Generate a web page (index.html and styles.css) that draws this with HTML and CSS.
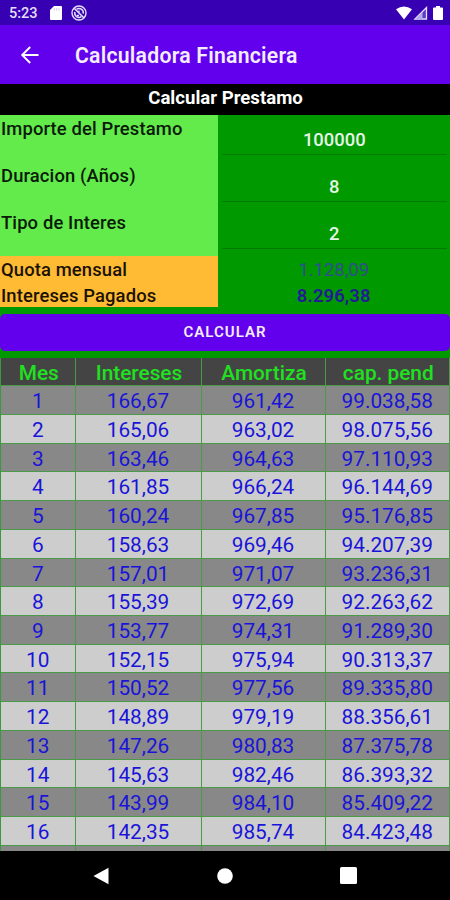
FILE: index.html
```html
<!DOCTYPE html>
<html lang="es">
<head>
  <meta charset="UTF-8">
  <title>Calculadora Financiera</title>
  <link rel="stylesheet" href="styles.css">
</head>
<body>

  <!-- Barra de estado -->
  <div class="estado">
    <span class="hora">5:23</span>
    <svg class="ico-sd" width="12" height="14" viewBox="0 0 12 14"><path d="M4 0H11Q12 0 12 1V13Q12 14 11 14H1Q0 14 0 13V4Z" fill="#fff"/><path d="M4.3 2v2.6M6.6 2v2.6M8.9 2v2.6" stroke="#d5ccf3" stroke-width="1"/></svg>
    <svg class="ico-sync" width="16" height="16" viewBox="0 0 16 16" fill="none" stroke="#e4defa"><circle cx="8" cy="8" r="7" stroke-width="1.4"/><path d="M5.6 4.2A4.3 4.3 0 0 1 12.2 8.6M10.4 11.7A4.3 4.3 0 0 1 3.9 7" stroke-width="1.5"/><path d="M3.2 3.2L12.8 12.8" stroke-width="1.6"/><path d="M8 5.5V7.5M8 10.5H6" stroke-width="1.3"/></svg>
    <svg class="ico-red" width="48" height="15" viewBox="0 0 48 15"><path d="M0 3.2Q8 -2.2 16 3.2L8 13.5Z" fill="#fff"/><path d="M19 13L30.5 1.5V13Z" fill="#5a3cc6" stroke="#e6e0fa" stroke-width="1.3"/><path d="M19 13.5L26.5 6V13.5Z" fill="#b5a8e8"/><path d="M40 0h4v1.5h2q1 0 1 1V13q0 1-1 1h-8q-1 0-1-1V2.5q0-1 1-1h2z" fill="#fff"/></svg>
  </div>

  <!-- Cabecera -->
  <header class="cabecera">
    <svg width="20" height="20" viewBox="0 0 20 20" fill="none" stroke="#fff" stroke-width="1.9"><path d="M18.5 10H2.5M10.2 2L2.2 10L10.2 18"/></svg>
    <h1>Calculadora Financiera</h1>
  </header>

  <h2 class="subtitulo">Calcular Prestamo</h2>

  <main>
    <div class="formulario">
      <div class="campo">
        <label for="importe">Importe del Prestamo</label>
        <div class="entrada"><input id="importe" type="text" value="100000"></div>
      </div>
      <div class="campo">
        <label for="duracion">Duracion (Años)</label>
        <div class="entrada"><input id="duracion" type="text" value="8"></div>
      </div>
      <div class="campo">
        <label for="interes">Tipo de Interes</label>
        <div class="entrada"><input id="interes" type="text" value="2"></div>
      </div>
      <div class="resultado">
        <span class="nombre">Quota mensual</span>
        <span class="valor cuota">1.128,09</span>
      </div>
      <div class="resultado">
        <span class="nombre">Intereses Pagados</span>
        <span class="valor total">8.296,38</span>
      </div>
    </div>

    <button class="calcular">CALCULAR</button>

    <!-- Tabla de amortizacion -->
    <div class="tabla">
      <div class="fila titulos"><span>Mes</span><span>Intereses</span><span>Amortiza</span><span>cap. pend</span></div>
      <div class="fila"><span>1</span><span>166,67</span><span>961,42</span><span>99.038,58</span></div>
      <div class="fila"><span>2</span><span>165,06</span><span>963,02</span><span>98.075,56</span></div>
      <div class="fila"><span>3</span><span>163,46</span><span>964,63</span><span>97.110,93</span></div>
      <div class="fila"><span>4</span><span>161,85</span><span>966,24</span><span>96.144,69</span></div>
      <div class="fila"><span>5</span><span>160,24</span><span>967,85</span><span>95.176,85</span></div>
      <div class="fila"><span>6</span><span>158,63</span><span>969,46</span><span>94.207,39</span></div>
      <div class="fila"><span>7</span><span>157,01</span><span>971,07</span><span>93.236,31</span></div>
      <div class="fila"><span>8</span><span>155,39</span><span>972,69</span><span>92.263,62</span></div>
      <div class="fila"><span>9</span><span>153,77</span><span>974,31</span><span>91.289,30</span></div>
      <div class="fila"><span>10</span><span>152,15</span><span>975,94</span><span>90.313,37</span></div>
      <div class="fila"><span>11</span><span>150,52</span><span>977,56</span><span>89.335,80</span></div>
      <div class="fila"><span>12</span><span>148,89</span><span>979,19</span><span>88.356,61</span></div>
      <div class="fila"><span>13</span><span>147,26</span><span>980,83</span><span>87.375,78</span></div>
      <div class="fila"><span>14</span><span>145,63</span><span>982,46</span><span>86.393,32</span></div>
      <div class="fila"><span>15</span><span>143,99</span><span>984,10</span><span>85.409,22</span></div>
      <div class="fila"><span>16</span><span>142,35</span><span>985,74</span><span>84.423,48</span></div>
      <div class="fila"><span></span><span></span><span></span><span></span></div>
    </div>
  </main>

  <!-- Botones del sistema -->
  <nav class="sistema">
    <svg width="16" height="18" viewBox="0 0 16 18"><path d="M15.5 .8V17.2L.5 9Z" fill="#fff"/></svg>
    <svg width="16" height="16" viewBox="0 0 16 16"><circle cx="8" cy="8" r="7.8" fill="#fff"/></svg>
    <svg width="17" height="17" viewBox="0 0 17 17"><rect width="17" height="17" rx="1.5" fill="#fff"/></svg>
  </nav>

</body>
</html>
```
FILE: styles.css
```css
* {
  box-sizing: border-box;
}

body {
  display: flex;
  flex-direction: column;
  width: 450px;
  height: 900px;
  margin: 0;
  overflow: hidden;
  font-family: Roboto, sans-serif;
  background-color: #000;
}

.estado {
  display: flex;
  align-items: center;
  flex: none;
  height: 25px;
  padding: 1px 6px 0 9px;
  background-color: #3700b3;
  color: #e4defa;
}

.hora {
  width: 41px;
  font-size: 14.5px;
  font-weight: 500;
}

.ico-sync {
  margin-left: 9px;
}

.ico-red {
  margin-left: auto;
}

.cabecera {
  display: flex;
  align-items: center;
  flex: none;
  height: 59px;
  padding-left: 20px;
  background-color: #6200ee;
}

.cabecera h1 {
  margin: 2px 0 0 35px;
  color: #f4edfe;
  font-size: 21.2px;
  font-weight: 600;
  letter-spacing: 0.25px;
}

.subtitulo {
  flex: none;
  height: 31px;
  margin: 0;
  padding-left: 1px;
  line-height: 28px;
  color: #fff;
  font-size: 18.6px;
  font-weight: 700;
  text-align: center;
}

main {
  display: flow-root;
  height: 736px;
  overflow: hidden;
  background-color: #009900;
}

.campo,
.resultado {
  display: grid;
  grid-template-columns: 217.5px 1fr;
}

.campo {
  height: 47px;
}

.campo label {
  line-height: 28px;
  background-color: #62eb4b;
}

.campo label,
.nombre {
  padding-left: 1px;
  color: #0a1a08;
  font-size: 18.4px;
  font-weight: 500;
  letter-spacing: 0.13px;
}

.entrada {
  padding: 0 3px 0 4px;
}

.entrada input {
  display: block;
  width: 100%;
  height: 40px;
  padding: 9px 0 0;
  border: 0;
  border-bottom: 1px solid #007a00;
  background: none;
  color: #e6f5e6;
  font-family: inherit;
  font-size: 18.4px;
  font-weight: 500;
  text-align: center;
}

.resultado {
  grid-template-rows: 100%;
  height: 25.7px;
  line-height: 27px;
}

.resultado .nombre {
  background-color: #ffbb33;
  color: #1a1205;
}

.valor {
  font-size: 18.4px;
  text-align: center;
}

.cuota {
  color: #2f4d95;
}

.total {
  color: #211b96;
  font-weight: 600;
  letter-spacing: 0.15px;
}

.calcular {
  display: block;
  width: 450px;
  height: 37px;
  margin: 6.6px 0;
  padding: 0;
  border: 0;
  border-radius: 5px;
  background-color: #6200ee;
  color: #f4edfe;
  font-family: inherit;
  font-size: 15px;
  font-weight: 600;
  letter-spacing: 1px;
}

.tabla {
  border-left: 1px solid #3a9a3a;
}

.fila {
  display: grid;
  grid-template-columns: 74.5px 126px 124px 124.5px;
  grid-template-rows: 100%;
  height: 28.73px;
  background-color: #cdcdcd;
  color: #1a14d8;
  font-size: 20.8px;
  line-height: 30px;
  text-align: center;
}

.fila:nth-child(even) {
  background-color: #888;
}

.fila span {
  border-right: 1px solid #4a9a4a;
  border-bottom: 1px solid #4a9a4a;
}

.fila.titulos {
  background-color: #444;
  color: #20e020;
  font-weight: 500;
  font-size: 20.8px;
}

.titulos span {
  padding-left: 2px;
}

.sistema {
  display: flex;
  align-items: center;
  justify-content: space-between;
  height: 49px;
  padding: 0 93px;
}
```
